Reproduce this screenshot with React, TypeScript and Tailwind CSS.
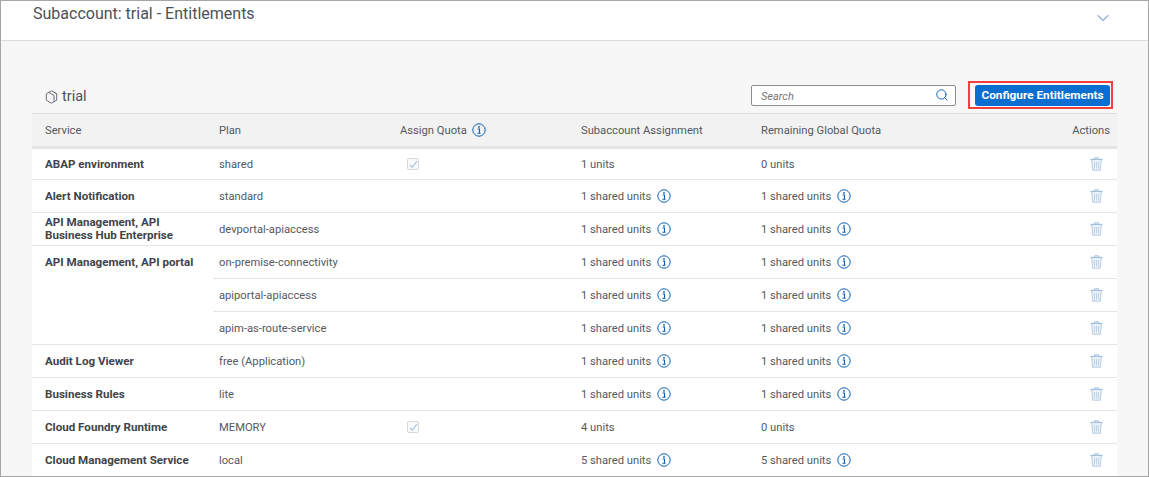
import { ChevronDown, Search } from "lucide-react";

const InfoIcon = () => (
  <svg width="14" height="14" viewBox="0 0 14 14" fill="none" className="shrink-0 text-[#0a5fb4]">
    <circle cx="7" cy="7" r="6.2" stroke="currentColor" strokeWidth="1" />
    <circle cx="7" cy="3.9" r="0.9" fill="currentColor" />
    <path d="M5.6 6h1.9v4.1M5.4 10.3h3.2" stroke="currentColor" strokeWidth="1.1" />
  </svg>
);

const TrashIcon = () => (
  <svg width="13" height="14" viewBox="0 0 13 14" fill="none" className="inline-block">
    <path d="M0.5 2.5h12" stroke="#a0bedd" strokeWidth="1.4" />
    <path d="M4.5 1.8V0.8h4v1" stroke="#a0bedd" strokeWidth="1" />
    <path d="M1.8 3l0.8 10.2h7.8L11.2 3" fill="#eaf1f8" stroke="#b5cce4" strokeWidth="1" />
    <path d="M4.5 5v6.5M6.5 5v6.5M8.5 5v6.5" stroke="#bfd3e8" strokeWidth="1" />
  </svg>
);

const CubeIcon = () => (
  <svg width="13" height="14" viewBox="0 0 13 14" fill="none" stroke="#5a6066" strokeWidth="0.9">
    <path d="M6.5 0.8l5.2 3v6.4l-5.2 3-5.2-3V3.8z" />
    <path d="M3.6 2.4l5.4 3v6.2" />
    <path d="M9.4 2.4l2.3 1.4" />
  </svg>
);

const CheckedBox = () => (
  <span className="ml-[7px] flex h-[12px] w-[12px] items-center justify-center rounded-[2px] border border-[#d5d8db] bg-[#fafafa]">
    <svg width="9" height="9" viewBox="0 0 9 9" fill="none">
      <path d="M1 4.8l2.2 2.6L8 1" stroke="#a9c4e0" strokeWidth="1.2" />
    </svg>
  </span>
);

const Units = ({ text, info }: { text: string; info?: boolean }) => (
  <span className="flex items-center gap-[6px]">
    <span className="pt-[2px]">{text}</span>
    {info && <InfoIcon />}
  </span>
);

interface Plan {
  plan: string;
  check?: boolean;
  assigned: string;
  remaining: string;
  info: boolean;
}

interface Service {
  name: string;
  plans: Plan[];
}

const shared = (plan: string, n = 1): Plan => ({
  plan,
  assigned: `${n} shared units`,
  remaining: `${n} shared units`,
  info: true,
});

const services: Service[] = [
  { name: "ABAP environment", plans: [{ plan: "shared", check: true, assigned: "1 units", remaining: "0 units", info: false }] },
  { name: "Alert Notification", plans: [shared("standard")] },
  { name: "API Management, API Business Hub Enterprise", plans: [shared("devportal-apiaccess")] },
  {
    name: "API Management, API portal",
    plans: [shared("on-premise-connectivity"), shared("apiportal-apiaccess"), shared("apim-as-route-service")],
  },
  { name: "Audit Log Viewer", plans: [shared("free (Application)")] },
  { name: "Business Rules", plans: [shared("lite")] },
  { name: "Cloud Foundry Runtime", plans: [{ plan: "MEMORY", check: true, assigned: "4 units", remaining: "0 units", info: false }] },
  { name: "Cloud Management Service", plans: [shared("local", 5)] },
];

const App = () => {
  return (
    <div className="flex h-[477px] w-[1149px] flex-col overflow-hidden border border-[#a6a6a6] bg-[#f7f7f7] font-['Roboto',sans-serif] text-[11.2px] text-[#54595e]">
      <div className="flex h-[40px] shrink-0 items-start justify-between border-b border-[#dcdcdc] bg-white pl-[32px] pr-[35px]">
        <h1 className="pt-[2px] text-[16px] leading-[22px] text-[#4c5157]">Subaccount: trial - Entitlements</h1>
        <ChevronDown size={20} strokeWidth={1} className="mt-[7px] text-[#0a5fb4]" />
      </div>

      <div className="ml-[31px] mr-[31px] mt-[40px] flex-1">
        <div className="flex h-[32px] items-start justify-between pr-[4px]">
          <div className="flex h-[31px] items-center gap-[4px] pl-[13px] text-[14.5px] text-[#4c5157]">
            <CubeIcon />
            trial
          </div>
          <div className="flex items-start gap-[12px]">
            <div className="mt-[4px] flex h-[21px] w-[205px] items-center justify-between rounded-[2px] border border-[#8b8f94] bg-white pl-[9px] pr-[6px]">
              <span className="pt-[3px] text-[11px] italic text-[#74777a]">Search</span>
              <Search size={14} strokeWidth={1.6} className="mb-[2px] text-[#0a5fb4]" />
            </div>
            <div className="border-2 border-[#f43f3f] pb-[1px] pl-[5px] pr-[1px] pt-[2px]">
              <button className="flex h-[21px] w-[135px] items-center justify-center rounded-[3px] bg-[#0a6ed1] text-[11.8px] font-bold text-white">
                Configure Entitlements
              </button>
            </div>
          </div>
        </div>

        <table className="w-[1085px] table-fixed border-collapse bg-white text-left">
          <colgroup>
            <col className="w-[181px]" />
            <col className="w-[181px]" />
            <col className="w-[181px]" />
            <col className="w-[180px]" />
            <col className="w-[200px]" />
            <col className="w-[162px]" />
          </colgroup>
          <thead>
            <tr className="h-[34px] border-t border-b-[3px] border-t-[#dcdcdc] border-b-[#e5e5e5] bg-[#f2f2f2]">
              <th className="pl-[13px] pt-[2px] font-normal">Service</th>
              <th className="pl-[6px] pt-[2px] font-normal">Plan</th>
              <th className="pl-[6px] font-normal">
                <span className="flex items-center gap-[5px]">
                  <span className="pt-[2px]">Assign Quota</span>
                  <InfoIcon />
                </span>
              </th>
              <th className="pl-[6px] pt-[2px] font-normal">Subaccount Assignment</th>
              <th className="pl-[6px] pt-[2px] font-normal">Remaining Global Quota</th>
              <th className="pr-[7px] pt-[2px] text-right font-normal">Actions</th>
            </tr>
          </thead>
          <tbody>
            {services.map((s, si) =>
              s.plans.map((p, i) => (
                <tr key={p.plan} className={`border-b border-[#e5e5e5] ${si === 0 ? "h-[32px]" : "h-[33px]"}`}>
                  {i === 0 && (
                    <td
                      rowSpan={s.plans.length}
                      className={`pl-[13px] pr-[6px] text-[11.6px] font-bold leading-[13px] text-[#3f4449] ${s.plans.length > 1 ? "align-top pt-[10px]" : "align-middle"}`}
                    >
                      {s.name}
                    </td>
                  )}
                  <td className="pl-[6px] pt-[2px]">{p.plan}</td>
                  <td className="pl-[6px]">{p.check && <CheckedBox />}</td>
                  <td className="pl-[6px]"><Units text={p.assigned} info={p.info} /></td>
                  <td className="pl-[6px]"><Units text={p.remaining} info={p.info} /></td>
                  <td className="pr-[14px] text-right"><TrashIcon /></td>
                </tr>
              ))
            )}
          </tbody>
        </table>
      </div>
    </div>
  );
};

export default App;
